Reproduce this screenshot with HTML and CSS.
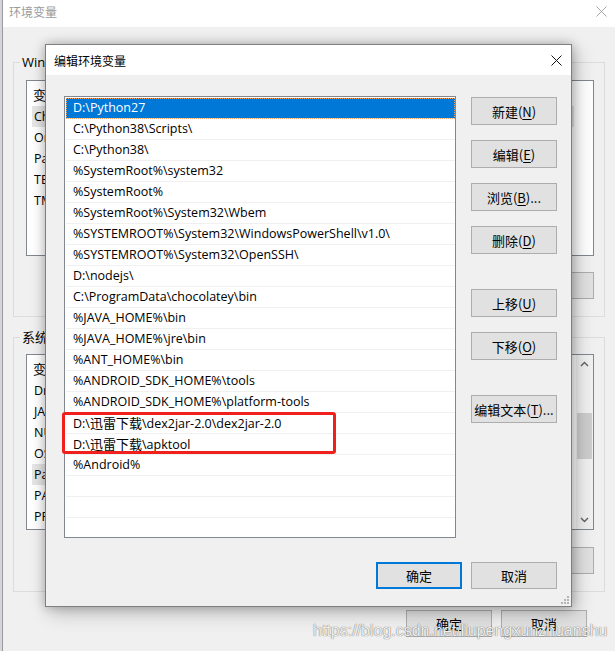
FILE: index.html
```html
<!DOCTYPE html>
<html lang="zh-CN">
<head>
<meta charset="utf-8">
<title>编辑环境变量</title>
<link rel="stylesheet" href="styles.css">
</head>
<body>
<div class="screen">
  <div class="edge"></div>
  <div class="bgwin">
    <div class="bg-title">
      <span class="bg-title-text">环境变量</span>
      <svg class="bg-close" width="11" height="11" viewBox="0 0 11 11"><path d="M0.5 0.5L10.5 10.5M10.5 0.5L0.5 10.5" stroke="#a6a6a6" stroke-width="1" fill="none"/></svg>
    </div>
    <div class="bg-body">
      <div class="group group-user">
        <span class="legend">Wind</span>
        <div class="lv">
          <div class="lv-head"><span class="cjk">变</span></div>
          <div class="lv-row hl">Ch</div>
          <div class="lv-row">Or</div>
          <div class="lv-row">Pa</div>
          <div class="lv-row">TE</div>
          <div class="lv-row">TM</div>
        </div>
        <div class="btnrow">
          <div class="btn"></div>
          <div class="btn"></div>
          <div class="btn"></div>
        </div>
      </div>
      <div class="group group-sys">
        <span class="legend">系统</span>
        <div class="lv lv-sys">
          <div class="lv-content">
            <div class="lv-head"><span class="cjk">变</span></div>
            <div class="lv-row">Dr</div>
            <div class="lv-row">JA</div>
            <div class="lv-row">NU</div>
            <div class="lv-row">OS</div>
            <div class="lv-row hl">Pa</div>
            <div class="lv-row">PA</div>
            <div class="lv-row">PR</div>
          </div>
          <div class="vscroll">
            <svg class="arrow" width="9" height="6" viewBox="0 0 9 6"><path d="M1 5L4.5 1.5L8 5" stroke="#606060" stroke-width="1.4" fill="none"/></svg>
            <div class="thumb"></div>
            <div class="track-fill"></div>
            <svg class="arrow" width="9" height="6" viewBox="0 0 9 6"><path d="M1 1L4.5 4.5L8 1" stroke="#606060" stroke-width="1.4" fill="none"/></svg>
          </div>
        </div>
        <div class="btnrow btnrow-sys">
          <div class="btn"></div>
          <div class="btn"></div>
          <div class="btn"></div>
        </div>
      </div>
      <div class="bg-foot">
        <div class="btn">确定</div>
        <div class="btn">取消</div>
      </div>
    </div>
  </div>

  <div class="dialog">
    <div class="dlg-title">
      <span class="dlg-title-text">编辑环境变量</span>
      <svg class="dlg-close" width="11" height="11" viewBox="0 0 11 11"><path d="M0.5 0.5L10.5 10.5M10.5 0.5L0.5 10.5" stroke="#111" stroke-width="1" fill="none"/></svg>
    </div>
    <div class="dlg-body">
      <div class="dlg-main">
        <div class="paths">
          <div class="path sel">D:\Python27</div>
          <div class="path">C:\Python38\Scripts\</div>
          <div class="path">C:\Python38\</div>
          <div class="path">%SystemRoot%\system32</div>
          <div class="path">%SystemRoot%</div>
          <div class="path">%SystemRoot%\System32\Wbem</div>
          <div class="path">%SYSTEMROOT%\System32\WindowsPowerShell\v1.0\</div>
          <div class="path">%SYSTEMROOT%\System32\OpenSSH\</div>
          <div class="path">D:\nodejs\</div>
          <div class="path">C:\ProgramData\chocolatey\bin</div>
          <div class="path">%JAVA_HOME%\bin</div>
          <div class="path">%JAVA_HOME%\jre\bin</div>
          <div class="path">%ANT_HOME%\bin</div>
          <div class="path">%ANDROID_SDK_HOME%\tools</div>
          <div class="path">%ANDROID_SDK_HOME%\platform-tools</div>
          <div class="path">D:\<span class="cjk">迅雷下载</span>\dex2jar-2.0\dex2jar-2.0</div>
          <div class="path">D:\<span class="cjk">迅雷下载</span>\apktool</div>
          <div class="path">%Android%</div>
          <div class="path"></div>
          <div class="path"></div>
          <div class="path"></div>
        </div>
        <div class="side">
          <div class="side-group">
            <div class="btn">新建(<u>N</u>)</div>
            <div class="btn">编辑(<u>E</u>)</div>
            <div class="btn">浏览(<u>B</u>)...</div>
            <div class="btn">删除(<u>D</u>)</div>
          </div>
          <div class="side-group">
            <div class="btn">上移(<u>U</u>)</div>
            <div class="btn">下移(<u>O</u>)</div>
          </div>
          <div class="side-group">
            <div class="btn">编辑文本(<u>T</u>)...</div>
          </div>
        </div>
      </div>
      <div class="dlg-foot">
        <div class="btn default">确定</div>
        <div class="btn">取消</div>
      </div>
    </div>
    <svg class="grip" width="8" height="8" viewBox="0 0 8 8"><g fill="#b5b5b5"><rect x="6" y="0" width="2" height="2"/><rect x="3" y="3" width="2" height="2"/><rect x="6" y="3" width="2" height="2"/><rect x="0" y="6" width="2" height="2"/><rect x="3" y="6" width="2" height="2"/><rect x="6" y="6" width="2" height="2"/></g></svg>
  </div>

  <div class="mark"></div>
  <div class="watermark">https://blog.csdn.net/liupengxunzhuanshu</div>
</div>
</body>
</html>
```

FILE: styles.css
```css
* { box-sizing: border-box; }
html, body { margin: 0; padding: 0; }
body {
  width: 615px;
  height: 651px;
  overflow: hidden;
  background: #f0f0f0;
  font-family: "Open Sans", "Noto Sans CJK SC", sans-serif;
  font-size: 12.5px;
  color: #000;
}
u { text-underline-offset: 2px; }
.cjk { font-family: "Noto Sans CJK SC", sans-serif; font-size: 13px; }

.screen {
  position: relative;
  width: 615px;
  height: 651px;
  overflow: hidden;
  display: flex;
}
.edge {
  flex: none;
  width: 3px;
  background: #d6d3da;
  border-right: 1px solid #9b9aa0;
}

/* background window */
.bgwin {
  flex: 1;
  display: flex;
  flex-direction: column;
  background: #f0f0f0;
}
.bg-title {
  flex: none;
  height: 27px;
  background: #fff;
  display: flex;
  justify-content: space-between;
  align-items: center;
  padding: 0 8px 4px 6px;
}
.bg-title-text {
  font-family: "Noto Sans CJK SC", sans-serif;
  font-size: 12px;
  color: #9a9a9a;
  line-height: 17px;
}
.bg-body {
  padding: 0 10px 0 10px;
  display: flex;
  flex-direction: column;
}
.group {
  position: relative;
  border: 1px solid #dcdcdc;
  padding: 17px 10px 17px 12px;
}
.group-user { margin-top: 35px; }
.group-sys { margin-top: 20px; padding-top: 16px; }
.legend {
  position: absolute;
  top: -9px;
  left: 6px;
  width: 40px;
  padding: 0 2px;
  background: #f0f0f0;
  line-height: 17px;
  font-size: 13px;
  white-space: nowrap;
  overflow: hidden;
}
.lv {
  height: 176px;
  background: #fff;
  border: 1px solid #828790;
  overflow: hidden;
}
.lv-sys { display: flex; }
.lv-content { flex: 1; overflow: hidden; }
.lv-head {
  height: 25px;
  padding: 3px 0 0 6px;
  line-height: 21px;
}
.lv-row {
  height: 21px;
  line-height: 21px;
  margin-left: 5px;
  padding-left: 2px;
  white-space: nowrap;
}
.lv-row.hl { background: #e5e5e5; margin-right: 19px; }
.vscroll {
  flex: none;
  width: 17px;
  background: #f0f0f0;
  display: flex;
  flex-direction: column;
  align-items: center;
}
.vscroll .arrow { flex: none; margin: 6px 0; }
.thumb {
  flex: none;
  width: 15px;
  height: 46px;
  margin-top: 40px;
  background: #cdcdcd;
}
.track-fill { flex: 1; }
.btnrow {
  display: flex;
  justify-content: flex-end;
  gap: 9px;
  margin-top: 16px;
}
.btnrow-sys { margin-top: 17px; }
.bg-foot {
  display: flex;
  justify-content: flex-end;
  gap: 9px;
  margin-top: 18px;
  padding-right: 18px;
}

/* buttons */
.btn {
  flex: none;
  width: 86px;
  height: 27px;
  background: #e1e1e1;
  border: 1px solid #adadad;
  display: flex;
  align-items: center;
  justify-content: center;
  white-space: nowrap;
  font-family: "Noto Sans CJK SC", sans-serif;
  font-size: 13px;
}
.btn.default { border: 2px solid #0078d7; }

/* dialog window */
.dialog {
  position: absolute;
  left: 45px;
  top: 44px;
  width: 527px;
  height: 563px;
  border: 1px solid #7f7f7f;
  background: #f0f0f0;
  box-shadow: 0 0 10px rgba(0, 0, 0, 0.25), 4px 6px 18px rgba(0, 0, 0, 0.22);
  display: flex;
  flex-direction: column;
}
.dlg-title {
  flex: none;
  height: 30px;
  background: #fff;
  display: flex;
  align-items: center;
  justify-content: space-between;
  padding: 0 9px 0 8px;
}
.dlg-title-text {
  font-family: "Noto Sans CJK SC", sans-serif;
  font-size: 12px;
  line-height: 17px;
}
.dlg-body {
  flex: 1;
  padding: 21px 14px 17px 18px;
  display: flex;
  flex-direction: column;
}
.dlg-main { display: flex; gap: 15px; }
.paths {
  flex: none;
  width: 392px;
  height: 442px;
  background: #fff;
  border: 1px solid #828790;
  padding: 1px 0 0 1px;
  overflow: hidden;
}
.path {
  height: 21px;
  border-bottom: 1px solid #f0f0f0;
  line-height: 20px;
  padding-left: 7px;
  white-space: nowrap;
}
.path.sel {
  background: #0078d7;
  color: #fff;
  outline: 1px dotted #f5a261;
  outline-offset: -1px;
}
.side {
  display: flex;
  flex-direction: column;
  gap: 35px;
  margin-top: 1px;
}
.side-group {
  display: flex;
  flex-direction: column;
  gap: 15px;
}
.side .btn { height: 28px; }
.dlg-foot {
  display: flex;
  justify-content: flex-end;
  gap: 9px;
  margin-top: 24px;
}
.grip {
  position: absolute;
  right: 2px;
  bottom: 2px;
}

/* overlays */
.mark {
  position: absolute;
  left: 62px;
  top: 412px;
  width: 274px;
  height: 42px;
  border: 3px solid #f0201c;
  border-radius: 3px;
}
.watermark {
  position: absolute;
  left: 313px;
  top: 622px;
  font-family: "Liberation Sans", sans-serif;
  font-size: 16px;
  line-height: 18px;
  color: rgba(255, 255, 255, 0.92);
  text-shadow: 0 0 1px rgba(0, 0, 0, 0.5), 0 0 1px rgba(0, 0, 0, 0.35);
  white-space: nowrap;
}
```
